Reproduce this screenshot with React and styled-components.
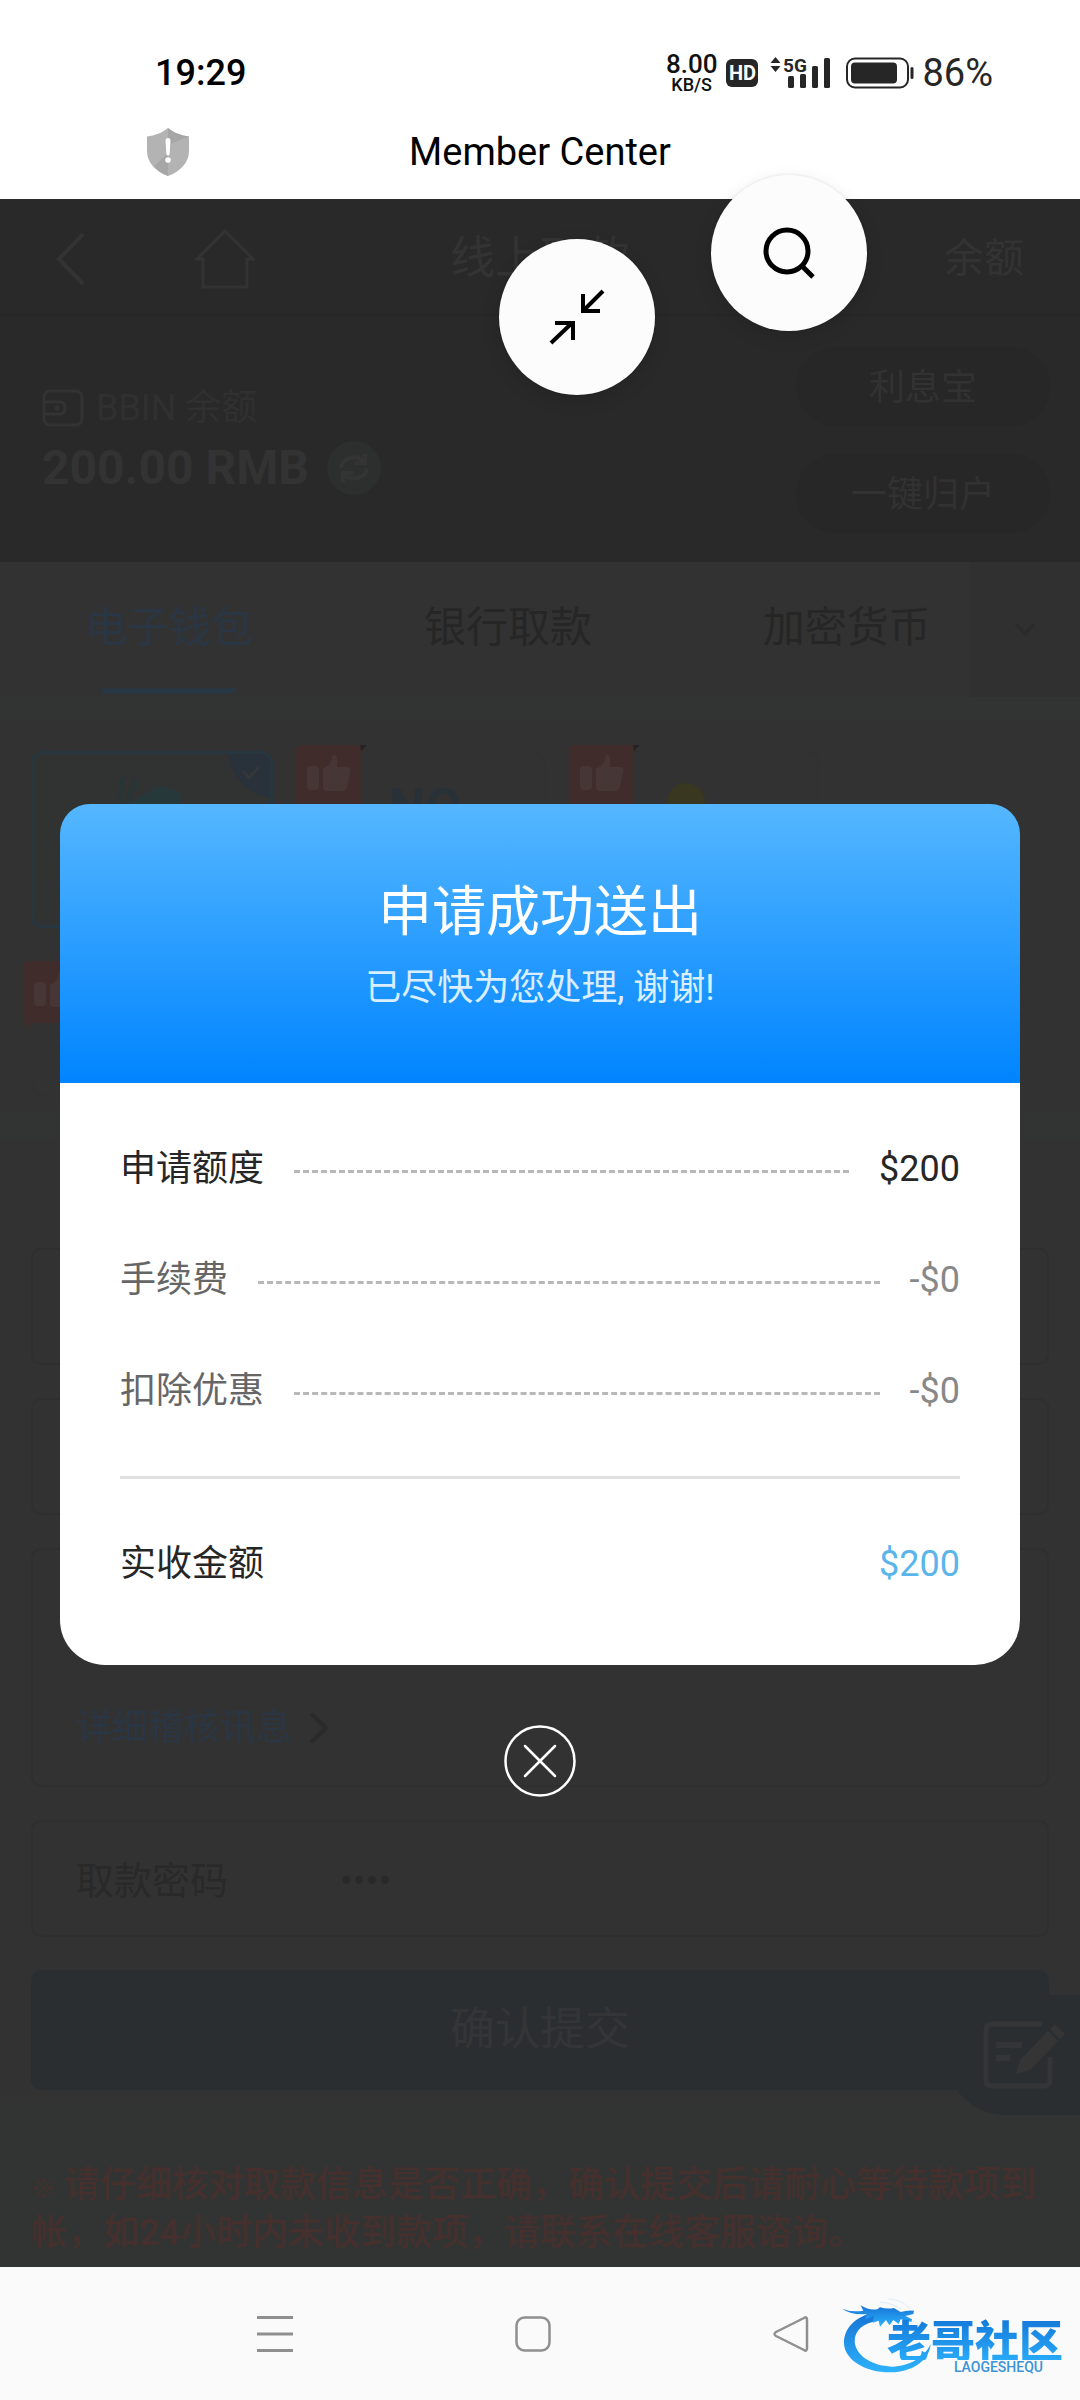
import React from 'react';
import styled, { createGlobalStyle } from 'styled-components';

const GlobalStyle = createGlobalStyle`
  *, *::before, *::after { box-sizing: border-box; }
  body {
    margin: 0;
    background: #fff;
    font-family: Roboto, 'Noto Sans CJK SC', sans-serif;
    font-size: 36px;
    line-height: 48px;
  }
  button, input {
    margin: 0;
    padding: 0;
    border: 0;
    background: none;
    font: inherit;
    color: inherit;
  }
  a { color: inherit; text-decoration: none; }
  svg { display: block; flex: none; }
`;

const Screen = styled.div`
  display: flex;
  flex-direction: column;
  min-height: 100vh;
`;

/* ---------- status bar ---------- */

const StatusBar = styled.header`
  display: flex;
  justify-content: space-between;
  align-items: flex-end;
  height: 104px;
  padding: 0 87px 0 155px;
  background: #fff;
`;

const Clock = styled.time`
  height: 55px;
  font-weight: 500;
  color: #000;
`;

const StatusIcons = styled.div`
  display: flex;
  align-items: center;
  height: 62px;
  color: #262626;
`;

const NetSpeed = styled.div`
  display: flex;
  flex-direction: column;
  align-items: center;
  margin-right: 9px;
  font-size: 26px;
  font-weight: 500;
  line-height: 24px;
  color: #111;
  small {
    font-size: 18px;
    line-height: 18px;
  }
`;

const HdBadge = styled.span`
  width: 32px;
  height: 28px;
  margin-right: 12px;
  border-radius: 6px;
  background: #262626;
  color: #fff;
  font-size: 20px;
  font-weight: 700;
  line-height: 28px;
  text-align: center;
`;

const Percent = styled.span`
  margin-left: 8px;
  font-size: 38px;
`;

/* ---------- browser title ---------- */

const TitleBar = styled.div`
  display: grid;
  grid-template-columns: 1fr auto 1fr;
  align-items: center;
  height: 95px;
  background: #fff;
  h1 {
    margin: 0;
    font-size: 38px;
    font-weight: 400;
    color: #000;
  }
  svg { margin-left: 146px; }
`;

/* ---------- page behind the dialog ---------- */

const Page = styled.main`
  position: relative;
  flex: 1;
  background: #323232;
  color: #292929;
`;

const PageHeader = styled.div`
  display: grid;
  grid-template-columns: 1fr auto 1fr;
  align-items: center;
  height: 117px;
  padding: 4px 56px 0;
  border-bottom: 2px solid #272727;
  background: #292929;
  color: #333;
  h2 {
    margin: 0;
    font-size: 45px;
    font-weight: 400;
  }
`;

const HeaderLinks = styled.nav`
  display: flex;
  align-items: center;
  gap: 110px;
`;

const HeaderRight = styled.a`
  justify-self: end;
  font-size: 40px;
`;

const Balance = styled.section`
  display: flex;
  justify-content: space-between;
  height: 246px;
  padding: 31px 30px 0 42px;
  background: #292929;
  color: #333;
`;

const BalanceInfo = styled.div`
  padding-top: 37px;
`;

const BalanceLabel = styled.div`
  display: flex;
  align-items: center;
  gap: 12px;
  color: #303030;
`;

const BalanceAmount = styled.div`
  display: flex;
  align-items: center;
  gap: 18px;
  height: 72px;
  font-size: 48px;
  font-weight: 700;
`;

const RefreshButton = styled.button`
  display: grid;
  place-items: center;
  width: 54px;
  height: 54px;
  border-radius: 50%;
  background: #2d2e2e;
  color: #343434;
`;

const PillColumn = styled.div`
  display: flex;
  flex-direction: column;
  gap: 28px;
`;

const Pill = styled.button`
  width: 254px;
  height: 79px;
  padding-top: 2px;
  border-radius: 40px;
  background: #272727;
  color: #323232;
`;

const Tabs = styled.div`
  position: relative;
  display: flex;
  height: 135px;
  padding-right: 64px;
`;

const Tab = styled.button`
  display: flex;
  flex: 1;
  flex-direction: column;
  align-items: center;
  justify-content: space-between;
  padding: 39px 0 3px;
  font-size: 42px;
  line-height: 54px;
  color: ${props => props.$active ? '#2a3644' : '#262626'};
  &::after {
    content: '';
    width: 134px;
    height: 6px;
    background: ${props => props.$active ? '#283742' : 'transparent'};
  }
`;

// sits over the end of the tab strip
const TabsMore = styled.button`
  position: absolute;
  top: 0;
  right: 0;
  display: grid;
  place-items: center;
  width: 110px;
  height: 135px;
  background: #303030;
`;

const Band = styled.div`
  height: ${props => props.$height}px;
  background: #323433;
`;

const Wallets = styled.section`
  display: grid;
  grid-template-columns: repeat(3, 242px);
  gap: 24px 31px;
  height: 390px;
  padding: 30px 31px 0;
`;

const WalletCard = styled.div`
  position: relative;
  display: flex;
  justify-content: center;
  height: ${props => props.$short ? 130 : 177}px;
  padding-top: 24px;
  border: ${props => props.$selected ? '3px solid #28373f' : '2px solid #313131'};
  border-radius: 12px;
  background: ${props => props.$selected ? '#313333' : 'transparent'};
  overflow: ${props => props.$selected ? 'hidden' : 'visible'};
  font-size: 52px;
  font-weight: 700;
  line-height: 62px;
  color: #293138;
`;

const ThumbBadge = styled.span`
  position: absolute;
  top: -8px;
  left: -12px;
`;

const SelectedCorner = styled.span`
  position: absolute;
  top: 0;
  right: 0;
`;

const Form = styled.form`
  display: flex;
  flex-direction: column;
  gap: 33px;
  padding: 109px 31px 0;
`;

const Field = styled.div`
  display: flex;
  align-items: ${props => props.$tall ? 'flex-end' : 'center'};
  height: ${props => props.$tall ? 239 : 117}px;
  padding: ${props => props.$tall ? '0 43px 33px' : '4px 43px 0'};
  border: 2px solid #2f2f2f;
  border-radius: 10px;
  font-size: 38px;
  label { width: 264px; }
  input {
    flex: 1;
    min-width: 0;
    font-size: 38px;
    outline: 0;
  }
`;

const DetailLink = styled.a`
  display: flex;
  align-items: center;
  gap: 16px;
  font-size: 36px;
  color: #2a3644;
`;

const Submit = styled.button`
  height: 120px;
  border-radius: 10px;
  background: #2a2e31;
  color: #343536;
  font-size: 45px;
`;

const Note = styled.p`
  height: 177px;
  margin: 0;
  padding: 71px 31px 0;
  background: linear-gradient(#323232, #323433 30px);
  color: #45302e;
  font-weight: 500;
  small {
    display: inline-block;
    width: 24px;
    font-size: 24px;
    line-height: 24px;
  }
`;

// floats at the window edge over the form
const FeedbackButton = styled.button`
  position: absolute;
  right: 0;
  bottom: 152px;
  display: flex;
  align-items: center;
  width: 134px;
  height: 120px;
  padding-left: 36px;
  border-radius: 60px 0 0 60px;
  background: #2a2e31;
`;

/* ---------- dialog ---------- */

const Overlay = styled.div`
  position: absolute;
  inset: 0;
  display: flex;
  align-items: center;
  padding: 3px 60px 0;
`;

const Dialog = styled.section`
  position: relative;
  flex: 1;
`;

const DialogHead = styled.div`
  height: 279px;
  padding-top: 73px;
  border-radius: 30px 30px 0 0;
  background: linear-gradient(#55b7ff, #0084ff);
  color: #fff;
  text-align: center;
  h3 {
    margin: 0 0 15px;
    font-size: 54px;
    font-weight: 400;
    line-height: 72px;
  }
  p {
    margin: 0;
    color: #d9eeff;
  }
`;

const DialogBody = styled.dl`
  margin: 0;
  padding: 30px 60px 46px;
  border-radius: 0 0 45px 45px;
  background: #fff;
`;

const Row = styled.div`
  display: flex;
  align-items: center;
  gap: 30px;
  height: 111px;
  color: ${props => props.$muted ? '#666' : '#262626'};
  dd {
    margin: 0;
    color: ${props => props.$muted ? '#888' : '#262626'};
  }
`;

const Leader = styled.span`
  flex: 1;
  margin-top: 6px;
  border-top: 3px dashed #b8b8b8;
`;

const TotalRow = styled(Row)`
  justify-content: space-between;
  margin-top: 29px;
  dd { color: #5ab5ea; }
`;

const Divider = styled.hr`
  height: 3px;
  margin: 30px 0 0;
  border: 0;
  background: #e1e1e1;
`;

const CloseButton = styled.button`
  position: absolute;
  top: calc(100% + 60px);
  left: calc(50% - 36px);
  width: 72px;
  height: 72px;
`;

const FloatButton = styled.button`
  position: absolute;
  top: ${props => props.$top}px;
  left: ${props => props.$left};
  display: grid;
  place-items: center;
  width: 156px;
  height: 156px;
  border-radius: 50%;
  background: #fcfcfc;
  box-shadow: 0 6px 18px rgba(0, 0, 0, 0.12), 0 0 3px rgba(0, 0, 0, 0.1);
`;

/* ---------- system navigation ---------- */

const NavBar = styled.nav`
  position: relative;
  display: flex;
  justify-content: center;
  gap: 222px;
  height: 133px;
  padding: 49px 14px 0 0;
  background: #fafafa;
  button {
    width: 36px;
    height: 36px;
  }
`;

const Watermark = styled.div`
  position: absolute;
  right: 0;
  bottom: 0;
  width: 250px;
  height: 120px;
  svg {
    position: absolute;
    inset: 0;
  }
`;

const WatermarkText = styled.div`
  position: relative;
  display: flex;
  flex-direction: column;
  align-items: flex-end;
  padding: 38px 17px 0 0;
  font-family: 'Noto Sans CJK SC', sans-serif;
  font-size: 44px;
  font-weight: 900;
  line-height: 42px;
  b {
    font-weight: 900;
    background: linear-gradient(#1478d8, #28a9f8);
    background-clip: text;
    color: transparent;
  }
  small {
    padding-right: 20px;
    font-family: Roboto, sans-serif;
    font-size: 14px;
    font-weight: 500;
    line-height: 14px;
    color: #3b93d8;
  }
`;

const Signal = () => (
  <svg width="61" height="42" viewBox="0 -4 61 42" fill="#262626">
    <path d="M5.500 1 10.500 7H.5zM5.500 16 .5 10H10.500z" />
    <text x="13" y="16" fontFamily="Roboto" fontWeight="700" fontSize="19">5G</text>
    <rect x="18" y="20" width="6" height="12" rx="1.500" />
    <rect x="30" y="18" width="6" height="14" rx="1.500" />
    <rect x="42" y="10" width="6" height="22" rx="1.500" />
    <rect x="54" y="2" width="6" height="30" rx="1.500" />
  </svg>
);

const BatteryIcon = styled.svg`
  margin-left: 15px;
`;

const Battery = () => (
  <BatteryIcon width="68" height="32" viewBox="0 0 68 32">
    <rect x="1" y="1.500" width="61" height="29" rx="8" fill="none" stroke="#262626" strokeWidth="2" />
    <rect x="5" y="5.500" width="46" height="21" rx="4" fill="#262626" />
    <rect x="64.500" y="10" width="3" height="12" rx="1.500" fill="#262626" />
  </BatteryIcon>
);

const Shield = () => (
  <svg width="44" height="50" viewBox="0 0 44 50">
    <path d="M22 1C27 5.500 35 8.500 43 9.500V24C43 36 34 44.500 22 49 10 44.500 1 36 1 24V9.500C9 8.500 17 5.500 22 1z" fill="#b3b3b3" />
    <path d="M22 1C27 5.500 35 8.500 43 9.500L22 18z" fill="#a6a6a6" />
    <path d="M22 26 8 39C12 44 17 47 22 49z" fill="#a6a6a6" />
    <path d="M19.500 13.500a2.500 2.500 0 0 1 5 0L23.600 27a1.600 1.600 0 0 1-3.200 0z" fill="#fff" />
    <circle cx="22" cy="33" r="2.800" fill="#fff" />
  </svg>
);

const Thumb = () => (
  <svg width="76" height="68" viewBox="0 0 76 68">
    <path d="M8 0H72L67 6V58Q67 62 63 62H10L8 68 2 60V6Q2 0 8 0z" fill="#402c2a" />
    <path d="M66 0h7l-6 6z" fill="#252222" />
    <rect x="13" y="21" width="12" height="24" rx="4" fill="#463736" />
    <path d="M29 24 36 19Q38 16 38 11 42 8 43 14V22H53Q58 23 56 28L53 42Q52 46 47 46H32L29 44z" fill="#463736" />
  </svg>
);

const Dragon = () => (
  <svg width="250" height="120" viewBox="0 0 750 360">
    <defs>
      <linearGradient id="ring" x1="0" y1="0" x2="0" y2="1">
        <stop offset="0" stopColor="#1673d6" />
        <stop offset="1" stopColor="#2db2fb" />
      </linearGradient>
    </defs>
    <g fill="url(#ring)">
      <path d="M128 98C70 112 40 150 42 192 46 242 108 278 182 277 250 276 298 240 302 192 284 232 240 258 186 260 122 258 76 224 74 184 74 150 100 128 146 122z" />
      <path d="M36 86Q66 98 100 92L92 76Q116 92 142 88L150 82Q172 88 192 84L212 96Q232 90 252 92L250 102 226 108 246 118 244 126 212 118 206 132 190 120 178 136 168 120 150 140 146 122 128 128 132 108 106 118 110 102Q66 106 36 86z" />
    </g>
    <path d="M150 66Q190 70 214 88M176 56Q222 62 240 86" fill="none" stroke="#dceefb" strokeWidth="3" />
  </svg>
);

const rows = [
  { label: '申请额度', value: '$200' },
  { label: '手续费', value: '-$0', muted: true },
  { label: '扣除优惠', value: '-$0', muted: true },
];

const tabs = ['电子钱包', '银行取款', '加密货币'];

const App = () => (
  <Screen>
    <GlobalStyle />
    <StatusBar>
      <Clock>19:29</Clock>
      <StatusIcons>
        <NetSpeed>8.00<small>KB/S</small></NetSpeed>
        <HdBadge>HD</HdBadge>
        <Signal />
        <Battery />
        <Percent>86%</Percent>
      </StatusIcons>
    </StatusBar>
    <TitleBar>
      <Shield />
      <h1>Member Center</h1>
    </TitleBar>

    <Page>
      <PageHeader>
        <HeaderLinks>
          <a href="#back" aria-label="返回">
            <svg width="29" height="52" viewBox="0 0 29 52" fill="none" stroke="#333" strokeWidth="4">
              <path d="M27 1 3 26 27 51" />
            </svg>
          </a>
          <a href="#home" aria-label="首页">
            <svg width="60" height="60" viewBox="0 0 60 60" fill="none" stroke="#333" strokeWidth="3">
              <path d="M30 2 2 30H8V58H52V30H58z" />
            </svg>
          </a>
        </HeaderLinks>
        <h2>线上取款</h2>
        <HeaderRight href="#balance">余额</HeaderRight>
      </PageHeader>

      <Balance>
        <BalanceInfo>
          <BalanceLabel>
            <svg width="42" height="38" viewBox="0 0 42 38" fill="none" stroke="#333" strokeWidth="3">
              <rect x="2" y="2" width="38" height="34" rx="6" />
              <path d="M2 13H18Q23 13 23 19T18 25H2" />
              <circle cx="15" cy="19" r="1" />
            </svg>
            BBIN 余额
          </BalanceLabel>
          <BalanceAmount>
            200.00 RMB
            <RefreshButton type="button" aria-label="刷新">
              <svg width="34" height="34" viewBox="0 0 34 34" fill="none" stroke="currentColor" strokeWidth="4">
                <path d="M4 17C5 7 19 3 27 10M28 3V12H18M30 17C29 27 15 31 7 24M6 31V22H16" />
              </svg>
            </RefreshButton>
          </BalanceAmount>
        </BalanceInfo>
        <PillColumn>
          <Pill type="button">利息宝</Pill>
          <Pill type="button">一键归户</Pill>
        </PillColumn>
      </Balance>

      <Tabs>
        {tabs.map((tab, i) => (
          <Tab key={tab} type="button" $active={i === 0}>{tab}</Tab>
        ))}
        <TabsMore type="button" aria-label="更多">
          <svg width="22" height="16" viewBox="0 0 22 16" fill="none" stroke="#292b2c" strokeWidth="3">
            <path d="M2 2 11 12 20 2" />
          </svg>
        </TabsMore>
      </Tabs>
      <Band $height={24} />

      <Wallets>
        <WalletCard $selected>
          <svg width="70" height="60" viewBox="0 0 70 60">
            <path d="M0 40 5 8A7 7 0 1 1 14 12L4 40" fill="none" stroke="#263538" strokeWidth="3" />
            <path d="M10 26 42 8 64 14V50H16z" fill="#27383b" />
          </svg>
          <SelectedCorner>
            <svg width="42" height="44" viewBox="0 0 42 44">
              <path d="M0 0H42V44Q6 36 0 0z" fill="#29313a" />
              <path d="M15 17 21 24 31 13" fill="none" stroke="#33373a" strokeWidth="3" />
            </svg>
          </SelectedCorner>
        </WalletCard>
        <WalletCard>
          <ThumbBadge><Thumb /></ThumbBadge>
          NO
        </WalletCard>
        <WalletCard>
          <ThumbBadge><Thumb /></ThumbBadge>
          <svg width="60" height="52" viewBox="0 0 60 52"><ellipse cx="18" cy="26" rx="19" ry="20" fill="#39371f" /></svg>
        </WalletCard>
        <WalletCard $short>
          <ThumbBadge><Thumb /></ThumbBadge>
        </WalletCard>
      </Wallets>
      <Band $height={28} />

      <Form>
        <Field />
        <Field />
        <Field $tall>
          <DetailLink href="#audit">
            详细稽核讯息
            <svg width="22" height="32" viewBox="0 0 22 32" fill="none" stroke="#282a2c" strokeWidth="4">
              <path d="M3 2 18 16 3 30" />
            </svg>
          </DetailLink>
        </Field>
        <Field>
          <label htmlFor="pin">取款密码</label>
          <input id="pin" type="password" defaultValue="0000" autoComplete="off" />
        </Field>
        <Submit type="button">确认提交</Submit>
      </Form>
      <Note>
        <small>※</small> 请仔细核对取款信息是否正确，确认提交后请耐心等待款项到帐，如24小时内未收到款项，请联系在线客服谘询。
      </Note>

      <FeedbackButton type="button" aria-label="意见反馈">
        <svg width="84" height="72" viewBox="0 0 84 72" fill="none" stroke="#343536" strokeWidth="5">
          <path d="M60 5H10Q4 5 4 11V61Q4 67 10 67H62Q68 67 68 61V38" />
          <path d="M14 26H40M14 39H28" strokeWidth="6" />
          <path d="M34 55 38 41 66 12 76 22 48 51z" fill="#363535" stroke="none" />
          <path d="M68 10 73 5 83 15 78 20z" fill="#363535" stroke="none" />
        </svg>
      </FeedbackButton>

      <Overlay>
        <Dialog role="dialog" aria-labelledby="dialog-title">
          <DialogHead>
            <h3 id="dialog-title">申请成功送出</h3>
            <p>已尽快为您处理, 谢谢!</p>
          </DialogHead>
          <DialogBody>
            {rows.map(row => (
              <Row key={row.label} $muted={row.muted}>
                <dt>{row.label}</dt>
                <Leader />
                <dd>{row.value}</dd>
              </Row>
            ))}
            <Divider />
            <TotalRow>
              <dt>实收金额</dt>
              <dd>$200</dd>
            </TotalRow>
          </DialogBody>
          <CloseButton type="button" aria-label="关闭">
            <svg width="72" height="72" viewBox="0 0 72 72" fill="none" stroke="#fff" strokeWidth="2.500" strokeLinecap="round">
              <circle cx="36" cy="36" r="34.500" />
              <path d="M21 21 51 51M51 21 21 51" />
            </svg>
          </CloseButton>
        </Dialog>
      </Overlay>

      <FloatButton type="button" aria-label="缩小" $top={40} $left="calc(50% - 41px)">
        <svg width="56" height="56" viewBox="0 0 56 56" fill="none" stroke="#000" strokeWidth="4">
          <path d="M2 54 23 34M6 34H24V51M54 2 34 22M34 5V22H51" />
        </svg>
      </FloatButton>
      <FloatButton type="button" aria-label="搜索" $top={-24} $left="calc(50% + 171px)">
        <svg width="54" height="54" viewBox="0 0 54 54" fill="none" stroke="#000" strokeWidth="5">
          <circle cx="25" cy="25" r="21" />
          <path d="M40 40 51 51" />
        </svg>
      </FloatButton>
    </Page>

    <NavBar>
      <button type="button" aria-label="最近任务">
        <svg width="36" height="36" viewBox="0 0 36 36" stroke="#8f8f8f" strokeWidth="3">
          <path d="M0 1.500H36M0 18H36M0 34.500H36" />
        </svg>
      </button>
      <button type="button" aria-label="主页">
        <svg width="36" height="36" viewBox="0 0 36 36" fill="none" stroke="#8f8f8f" strokeWidth="2.500">
          <rect x="1.500" y="1.500" width="33" height="33" rx="8" />
        </svg>
      </button>
      <button type="button" aria-label="返回">
        <svg width="36" height="36" viewBox="0 0 36 36" fill="none" stroke="#8f8f8f" strokeWidth="2.500" strokeLinejoin="round">
          <path d="M31 2Q34 0 34 4V32Q34 36 31 34L3 20Q0 18 3 16z" />
        </svg>
      </button>
      <Watermark>
        <Dragon />
        <WatermarkText>
          <b>老哥社区</b>
          <small>LAOGESHEQU</small>
        </WatermarkText>
      </Watermark>
    </NavBar>
  </Screen>
);

export default App;
